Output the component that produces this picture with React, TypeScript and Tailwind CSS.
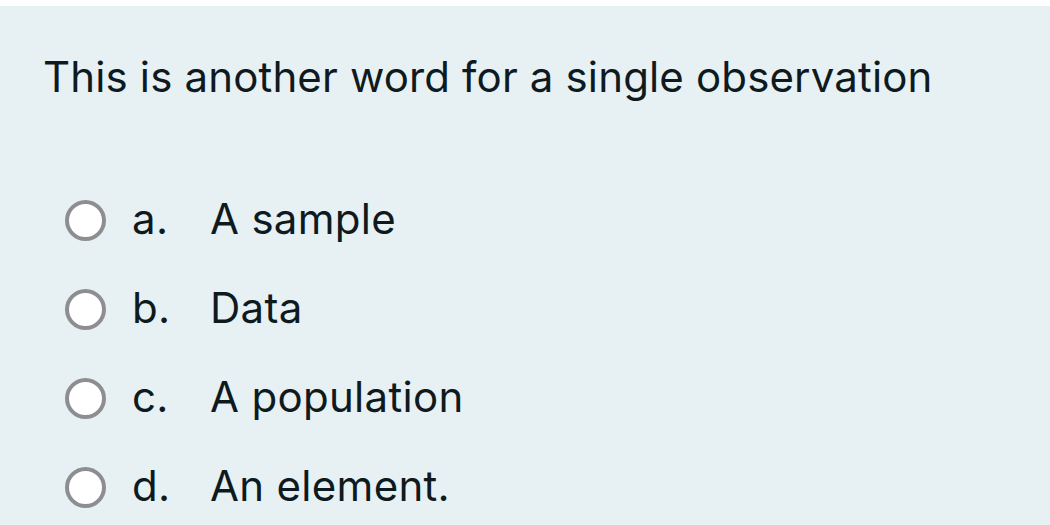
const options = [
  { letter: "a.", text: "A sample" },
  { letter: "b.", text: "Data" },
  { letter: "c.", text: "A population" },
  { letter: "d.", text: "An element." },
];

export default function App() {
  return (
    <div className="w-[1050px] h-[525px] bg-white pt-[6px] overflow-hidden font-['Inter',sans-serif]">
      <div className="h-full bg-[#e7f1f4] text-[#0f1a1e]">
        <p className="pl-[43px] pt-[41px] text-[42px] tracking-[0.15px] leading-[60px]">
          This is another word for a single observation
        </p>
        <div className="mt-[93px] flex flex-col gap-[49px]">
          {options.map((o) => (
            <label key={o.letter} className="flex items-center h-[40px]">
              <span className="ml-[65px] w-[41px] h-[41px] rounded-full bg-white border-[4px] border-[#8e8e92] shrink-0" />
              <span className="ml-[26px] w-[78px] text-[42px] tracking-[0.3px] -mt-[3px]">{o.letter}</span>
              <span className="text-[42px] tracking-[0.3px] -mt-[3px]">{o.text}</span>
            </label>
          ))}
        </div>
      </div>
    </div>
  );
}
